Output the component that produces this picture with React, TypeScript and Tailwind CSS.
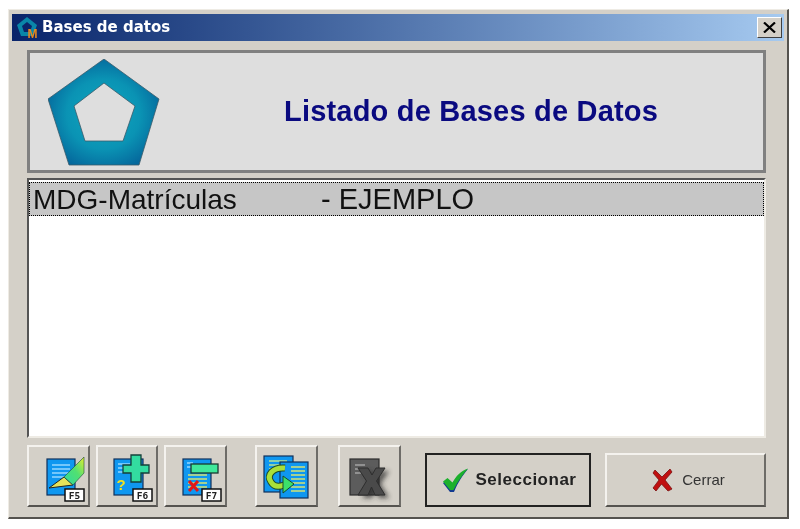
const Badge = ({ x, label }: { x: number; label: string }) => (
  <g>
    <rect x={x} y={44} width={19} height={12} fill="#fff" stroke="#111" strokeWidth={1.5} />
    <text
      x={x + 9.5}
      y={53.5}
      textAnchor="middle"
      fontSize={9.5}
      fontWeight={700}
      fontFamily="'DejaVu Sans Mono', monospace"
      fill="#222"
    >
      {label}
    </text>
  </g>
);

const DocLines = ({ x, y, w, n, gap = 4, color = "#9fdcff" }: { x: number; y: number; w: number; n: number; gap?: number; color?: string }) => (
  <g stroke={color} strokeWidth={1.4}>
    {Array.from({ length: n }).map((_, i) => (
      <line key={i} x1={x} x2={x + w} y1={y + i * gap} y2={y + i * gap} />
    ))}
  </g>
);

const EditIcon = () => (
  <svg width="62" height="62" viewBox="0 0 62 62" className="shrink-0">
    <defs>
      <linearGradient id="pen" x1="0" y1="1" x2="1" y2="0">
        <stop offset="0%" stopColor="#2fd8a0" />
        <stop offset="55%" stopColor="#52e070" />
        <stop offset="100%" stopColor="#e4ee30" />
      </linearGradient>
    </defs>
    <rect x="19" y="14" width="28" height="36" fill="#0f97f0" stroke="#10305a" strokeWidth="1.2" />
    <DocLines x={24} y={20} w={18} n={4} />
    <polygon points="21,43 36,32 45,40" fill="#e6e25a" stroke="#222" strokeWidth="1" />
    <polygon points="36,32 56,12 56,28 45,40" fill="url(#pen)" stroke="#1c4a3a" strokeWidth="0.6" />
    <Badge x={37} label="F5" />
  </svg>
);

const AddIcon = () => (
  <svg width="62" height="62" viewBox="0 0 62 62" className="shrink-0">
    <rect x="18" y="14" width="29" height="36" fill="#0f97f0" stroke="#10305a" strokeWidth="1.2" />
    <DocLines x={22} y={19} w={12} n={3} />
    <text x="25" y="45" textAnchor="middle" fontSize="15" fontWeight={700} fontFamily="'Liberation Sans', sans-serif" fill="#f2e21e">
      ?
    </text>
    <polygon
      points="35,10 45,10 45,20 53,20 53,28 45,28 45,37 35,37 35,28 27,28 27,20 35,20"
      fill="#33dca0"
      stroke="#15403a"
      strokeWidth="1.3"
    />
    <Badge x={37} label="F6" />
  </svg>
);

const RemoveIcon = () => (
  <svg width="62" height="62" viewBox="0 0 62 62" className="shrink-0">
    <rect x="18" y="14" width="28" height="36" fill="#0f97f0" stroke="#10305a" strokeWidth="1.2" />
    <DocLines x={23} y={30} w={19} n={4} color="#e2e86a" />
    <DocLines x={22} y={18} w={6} n={2} />
    <rect x="26" y="19" width="27" height="9" fill="#3fe89a" stroke="#1a3a30" strokeWidth="1.3" />
    <path d="M24 36 L33 46 M33 36 L24 46" stroke="#e01818" strokeWidth="3" />
    <Badge x={37} label="F7" />
  </svg>
);

const CopyIcon = () => (
  <svg width="63" height="62" viewBox="0 0 63 62" className="shrink-0">
    <rect x="9" y="11" width="29" height="36" fill="#0f97f0" stroke="#10305a" strokeWidth="1.2" />
    <DocLines x={14} y={16} w={18} n={3} color="#c6e88a" />
    <rect x="25" y="17" width="28" height="36" fill="#0f97f0" stroke="#10305a" strokeWidth="1.2" />
    <DocLines x={36} y={22} w={14} n={7} color="#e2e86a" />
    <path d="M30 23 C18 22 11 30 16 37 C19 42 24 42 29 40" fill="none" stroke="#1c4a2a" strokeWidth="7" />
    <path d="M30 23 C18 22 11 30 16 37 C19 42 24 42 29 40" fill="none" stroke="#a8e03a" strokeWidth="5" />
    <polygon points="28,31 39,39 28,48" fill="#3ce06a" stroke="#1c4a2a" strokeWidth="1" />
  </svg>
);

const DeleteIcon = () => (
  <svg width="63" height="62" viewBox="0 0 63 62" className="shrink-0">
    <defs>
      <filter id="soft" x="-40%" y="-40%" width="180%" height="180%">
        <feGaussianBlur stdDeviation="2.5" />
      </filter>
    </defs>
    <rect x="12" y="14" width="29" height="36" fill="#5c5c5c" stroke="#2c2c2c" strokeWidth="1.2" />
    <DocLines x={17} y={20} w={10} n={3} color="#a8a8a8" />
    <polygon
      points="20,23 30,23 34,30 38,23 47,23 38.5,36 47,50 37,50 33.5,42 30,50 20,50 28.5,36"
      fill="#2a2a2a"
      filter="url(#soft)"
      transform="translate(4 3)"
      opacity="0.75"
    />
    <polygon
      points="20,23 30,23 34,30 38,23 47,23 38.5,36 47,50 37,50 33.5,42 30,50 20,50 28.5,36"
      fill="#4a4a4a"
      stroke="#2e2e2e"
      strokeWidth="1"
    />
  </svg>
);

const btn =
  "flex items-center justify-center bg-[#d4d0c8] border-2 border-t-[#f4f2ee] border-l-[#f4f2ee] border-r-[#6e6c68] border-b-[#55534f]";

export default function App() {
  return (
    <div className="w-[800px] h-[529px] bg-white pt-[9px] pl-2 overflow-hidden blur-[0.4px] font-['Liberation_Sans',sans-serif]">
      <div className="w-[781px] h-[510px] bg-[#d4d0c8] border border-t-[#eeebe4] border-l-[#eeebe4] border-r-[#55534f] border-b-[#55534f] border-b-2 border-r-2 pt-1 pl-[3px]">
        <div className="w-[772px] h-[27px] flex items-center bg-gradient-to-r from-[#0a246a] to-[#a6caf0] pl-1 pr-[2px]">
          <svg width="23" height="27" viewBox="0 0 23 27" className="shrink-0">
            <polygon points="11,3 21,11 17,22 5,22 1,11" fill="#0a86a8" />
            <polygon points="11,8 16,12 14,18 8,18 6,12" fill="#0a246a" />
            <text x="16.5" y="24" textAnchor="middle" fontSize="12" fontWeight={700} fontFamily="'Liberation Sans', sans-serif" fill="#ea8a1c">
              M
            </text>
          </svg>
          <span className="ml-[3px] text-white font-bold text-[15px] font-['DejaVu_Sans',sans-serif]">Bases de datos</span>
          <div className="ml-auto w-[25px] h-[21px] flex items-center justify-center bg-[#d4d0c8] border border-t-white border-l-white border-r-[#404040] border-b-[#404040]">
            <svg width="13" height="11" viewBox="0 0 13 11" className="shrink-0">
              <path d="M1 0.5 L12 10.5 M12 0.5 L1 10.5" stroke="#000" strokeWidth="2.2" />
            </svg>
          </div>
        </div>

        <div className="pl-[15px] w-[754px]">
          <div className="mt-[9px] h-[123px] flex items-center bg-[#dedede] border-[3px] border-[#808080]">
            <svg width="112" height="107" viewBox="0 0 112 107" className="ml-[18px] mt-[2px] shrink-0">
              <defs>
                <radialGradient id="penta" cx="50%" cy="52%" r="55%">
                  <stop offset="0%" stopColor="#10a8c0" />
                  <stop offset="60%" stopColor="#0a93b4" />
                  <stop offset="100%" stopColor="#05689c" />
                </radialGradient>
              </defs>
              <path
                d="M56 0 L111 40 L91 106 L21 106 L0 40 Z M56 24 L26 47 L37 82 L75 82 L87 47 Z"
                fill="url(#penta)"
                fillRule="evenodd"
                stroke="#3a5a6a"
                strokeWidth="0.8"
              />
            </svg>
            <h1 className="ml-[124px] text-[29px] tracking-[0.2px] font-bold text-[#0a0a80] whitespace-nowrap">Listado de Bases de Datos</h1>
          </div>

          <div className="mt-[5px] h-[260px] bg-white border-2 border-t-[#555] border-l-[#555] border-r-[#eeebe4] border-b-[#eeebe4] pt-[2px]">
            <div className="h-[34px] flex items-center pl-[3px] pt-[2px] bg-[#c6c6c6] border border-dotted border-black text-[28px] text-[#111]">
              <span className="w-[288px]">MDG-Matrículas</span>
              <span className="text-[29px]">- EJEMPLO</span>
            </div>
          </div>

          <div className="mt-[7px] flex items-end">
            <button className={`${btn} w-[63px] h-[62px]`}><EditIcon /></button>
            <button className={`${btn} w-[62px] h-[62px] ml-[6px]`}><AddIcon /></button>
            <button className={`${btn} w-[63px] h-[62px] ml-[6px]`}><RemoveIcon /></button>
            <button className={`${btn} w-[63px] h-[62px] ml-[28px]`}><CopyIcon /></button>
            <button className={`${btn} w-[63px] h-[62px] ml-5`}><DeleteIcon /></button>
            <button className="w-[166px] h-[54px] ml-6 flex items-center justify-center gap-[7px] bg-[#d4d0c8] border-2 border-[#222] text-[#222] font-bold text-[17px] tracking-[0.5px]">
              <svg width="27" height="24" viewBox="0 0 27 24" className="shrink-0 ml-[2px]">
                <path d="M1 15 L5 12 L10 17 C14 9 19 4 26 1 C21 7 16 14 12 24 L8 24 Z" fill="#123a90" />
                <path d="M1 13.5 L5.5 10 L10.5 14.5 C14 8 19 3 26 0.5 C21 6 16 13 11.5 22 L8 22 Z" fill="#1cb02c" />
              </svg>
              Seleccionar
            </button>
            <button className={`${btn} w-[161px] h-[54px] ml-[14px] pl-[6px] gap-[9px] text-[15px] text-[#333]`}>
              <svg width="21" height="24" viewBox="0 0 21 24" className="shrink-0">
                <path d="M3 2 L10 9 L18 1 L20 4 L13 12 L20 21 L16 23 L9.5 16 L4 23 L1 20 L7 12 L1 5 Z" fill="#c01010" stroke="#7a1010" strokeWidth="0.8" />
              </svg>
              Cerrar
            </button>
          </div>
        </div>
      </div>
    </div>
  );
}
